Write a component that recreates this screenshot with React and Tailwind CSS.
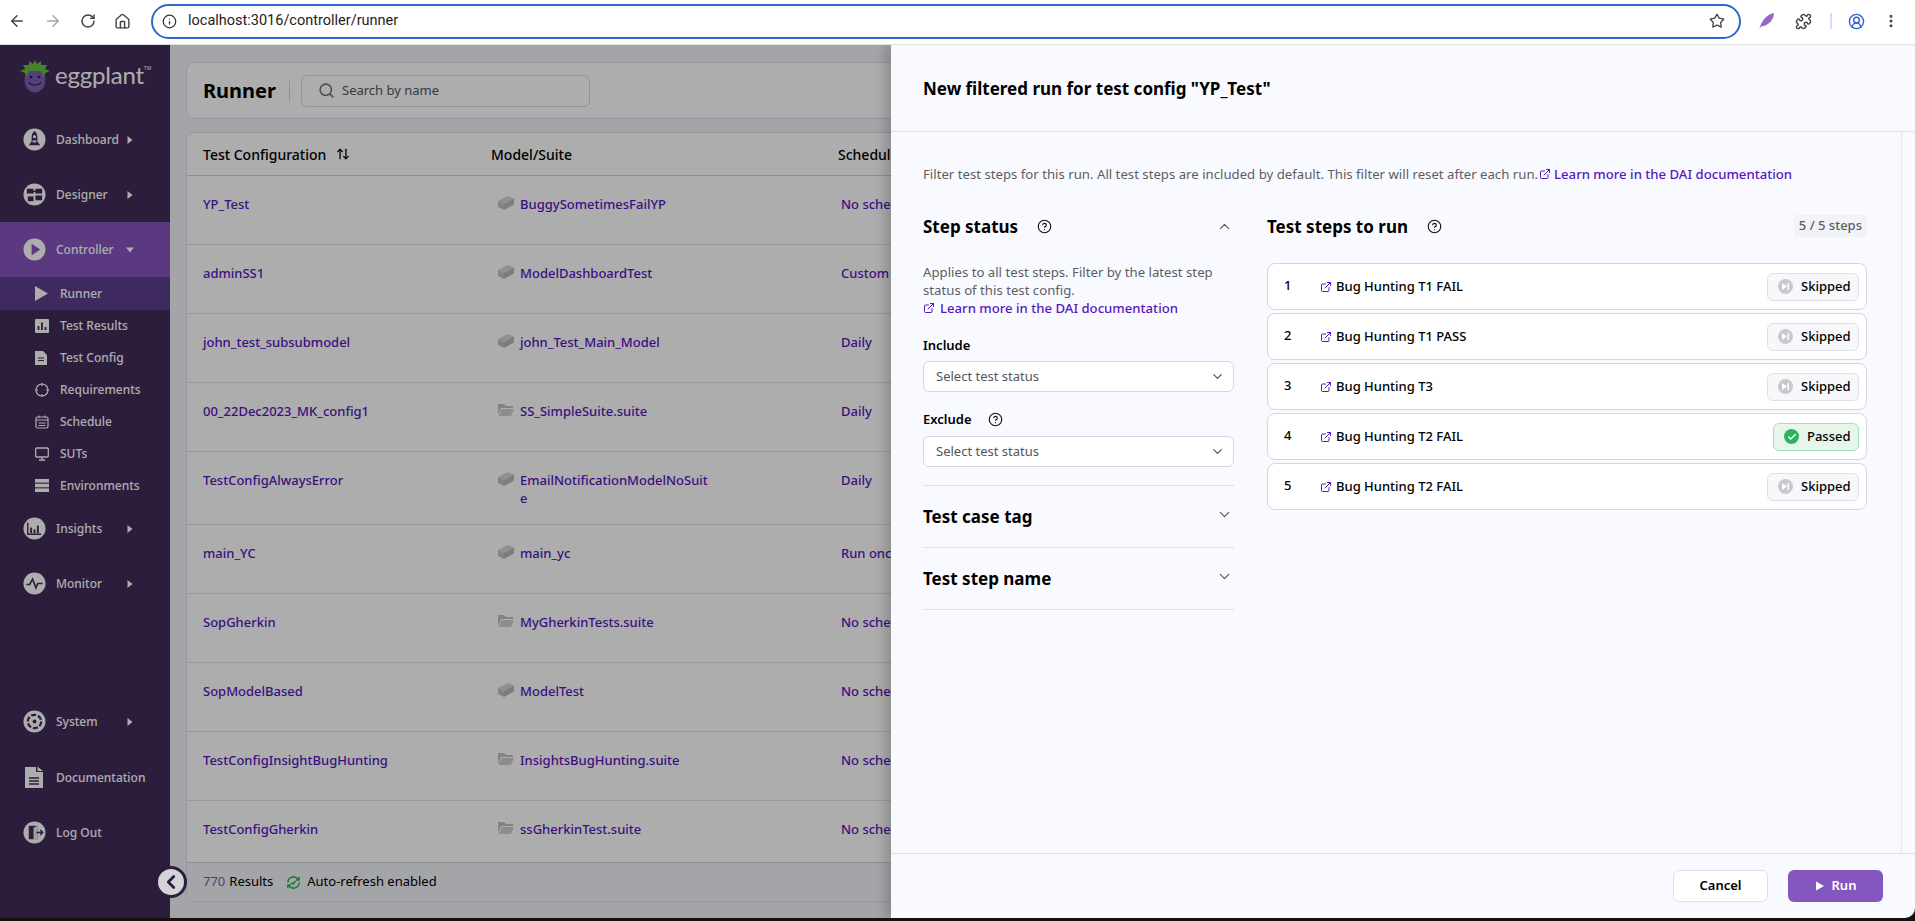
import React from 'react';
import { ArrowLeft, ArrowRight, ArrowUpDown, RotateCw, House, Info, Star, Puzzle, CircleUserRound, EllipsisVertical, Search, ChevronUp, ChevronDown, ChevronLeft, ExternalLink, CircleHelp, Check } from 'lucide-react';

const Caret = ({ down }) => (
    <svg width="8" height="10" viewBox="0 0 8 10" className={down ? "rotate-90" : ""}>
        <path d="M1.5 1 L6.5 5 L1.5 9 Z" fill="#fff" />
    </svg>
);

const CircleIcon = ({ children }) => (
    <svg width="23" height="23" viewBox="0 0 24 24" className="shrink-0">
        <circle cx="12" cy="12" r="11.5" fill="#fff" />
        {children}
    </svg>
);

const dark = "#412b5a";

const DashboardIcon = () => (
    <CircleIcon>
        <path d="M12 3 C14.5 5 15 7 15 10 L15 14 L18 18 L6 18 L9 14 L9 10 C9 7 9.500 5 12 3 Z" fill={dark} />
        <circle cx="12" cy="9" r="1.600" fill="#fff" />
        <rect x="10" y="13" width="4" height="2" fill="#fff" />
    </CircleIcon>
);

const DesignerIcon = () => (
    <CircleIcon>
        <rect x="4" y="6" width="7" height="5" fill={dark} />
        <rect x="13" y="6" width="7" height="5" fill={dark} />
        <rect x="5" y="14" width="6" height="5" fill={dark} />
        <rect x="13" y="13" width="7" height="5" fill={dark} />
        <rect x="10" y="8" width="4" height="1.500" fill={dark} />
    </CircleIcon>
);

const ControllerIcon = () => (
    <CircleIcon>
        <path d="M9 6 L18 12 L9 18 Z" fill="#8655bf" />
    </CircleIcon>
);

const InsightsIcon = () => (
    <CircleIcon>
        <path d="M5 6 V18 H19" stroke={dark} strokeWidth="1.500" fill="none" />
        <rect x="7.500" y="11" width="2" height="6" fill={dark} />
        <rect x="11" y="13" width="2" height="4" fill={dark} />
        <rect x="14.500" y="9" width="2" height="8" fill={dark} />
    </CircleIcon>
);

const MonitorIcon = () => (
    <CircleIcon>
        <path d="M3.500 13 H7 L10 7.500 L13.500 16.500 L15.500 12 H20.500" stroke={dark} strokeWidth="1.700" fill="none" />
    </CircleIcon>
);

const SystemIcon = () => (
    <CircleIcon>
        <circle cx="12" cy="12" r="7" fill="none" stroke={dark} strokeWidth="2.400" strokeDasharray="5.300 2" />
        <circle cx="12" cy="12" r="2" fill={dark} />
    </CircleIcon>
);

const DocIcon = () => (
    <svg width="18" height="23" viewBox="0 0 18 23">
        <path d="M0 1 H11 V6 H18 V22 H0 Z" fill="#fff" />
        <path d="M12.500 0.500 L18 5 H12.500 Z" fill="#fff" />
        <path d="M4 12 H14 M4 15 H14 M4 18 H14" stroke={dark} strokeWidth="1.300" />
    </svg>
);

const LogOutIcon = () => (
    <CircleIcon>
        <path d="M6 5 H15 V19 H6 Z" fill={dark} />
        <path d="M15 5 L11 7 V19 H15" fill="#fff" opacity="0.9" />
        <path d="M14 12 H20 M18 9.500 L20.500 12 L18 14.500" stroke={dark} strokeWidth="1.500" fill="none" />
    </CircleIcon>
);

const SubRunner = () => (
    <svg width="13" height="15" viewBox="0 0 13 15"><path d="M0 0 L13 7.500 L0 15 Z" fill="#fff" /></svg>
);
const SubResults = () => (
    <svg width="14" height="14" viewBox="0 0 14 14">
        <rect width="14" height="14" rx="1" fill="#fff" />
        <path d="M3.500 7 V11 M7 3.500 V11 M10.500 8 V11" stroke={dark} strokeWidth="1.800" />
    </svg>
);
const SubConfig = () => (
    <svg width="12" height="14" viewBox="0 0 12 14">
        <path d="M0 0 H8 L12 4 V14 H0 Z" fill="#fff" />
        <path d="M3 7 H9 M3 9.500 H9" stroke={dark} strokeWidth="1" />
    </svg>
);
const SubRequirements = () => (
    <svg width="14" height="14" viewBox="0 0 14 14" fill="none" stroke="#fff">
        <circle cx="7" cy="7" r="6" strokeWidth="1.200" />
        <path d="M7 0 V3 M7 11 V14 M0 7 H3 M11 7 H14" strokeWidth="1.200" />
    </svg>
);
const SubSchedule = () => (
    <svg width="14" height="14" viewBox="0 0 14 14" fill="none" stroke="#fff">
        <rect x="1" y="2" width="12" height="11" rx="1.500" strokeWidth="1.200" />
        <path d="M1 5 H13 M4 0.500 V3 M10 0.500 V3 M3.500 8 H10.500 M3.500 10.500 H10.500" strokeWidth="1.100" />
    </svg>
);
const SubSuts = () => (
    <svg width="14" height="14" viewBox="0 0 14 14" fill="none" stroke="#fff">
        <rect x="0.700" y="1" width="12.600" height="9" rx="1" strokeWidth="1.300" />
        <path d="M7 10 V13 M4 13 H10" strokeWidth="1.300" />
    </svg>
);
const SubEnv = () => (
    <svg width="14" height="13" viewBox="0 0 14 13" fill="#fff">
        <rect width="14" height="3.600" />
        <rect y="4.700" width="14" height="3.600" />
        <rect y="9.400" width="14" height="3.600" />
    </svg>
);

const BrickIcon = () => (
    <svg width="16" height="14" viewBox="0 0 16 14" className="shrink-0">
        <path d="M0 5 L10 0 L16 2.500 L6 8 Z" fill="#d4d4d4" />
        <path d="M0 5 L6 8 V14 L0 11 Z" fill="#c2c2c2" />
        <path d="M6 8 L16 2.500 V8.500 L6 14 Z" fill="#b9b9b9" />
    </svg>
);

const FolderIcon = () => (
    <svg width="16" height="13" viewBox="0 0 16 13" className="shrink-0">
        <path d="M0 1 H6 L8 3 H15 V5 H3 L0 12 Z" fill="#c2c2c2" />
        <path d="M3.500 6 H16 L13 13 H0.500 Z" fill="#d0d0d0" />
    </svg>
);

const AutoRefreshIcon = () => (
    <svg width="15" height="15" viewBox="0 0 24 24" fill="none" stroke="#2fb25c" strokeWidth="2.600" className="shrink-0">
        <path d="M3 12a9 9 0 0 1 15-6.700L21 8" />
        <path d="M21 3v5h-5" />
        <path d="M21 12a9 9 0 0 1-15 6.700L3 16" />
        <path d="M8 16H3v5" />
        <path d="M8.500 12 L11 14.500 L15.500 9.500" />
    </svg>
);

const Logo = () => (
    <div className="flex items-center h-[67px] pl-[20px] pb-[6px] shrink-0">
        <svg width="30" height="34" viewBox="0 0 30 34" className="shrink-0">
            <ellipse cx="15" cy="21" rx="10.500" ry="12.500" fill="#7f5fb5" />
            <path d="M15 1 L17 5 L21 2 L21 6 L27 6 L25 10 L30 12 L25 14 L24 18 L21 12 L9 12 L6 18 L5 14 L0 12 L5 10 L3 6 L9 6 L9 2 L13 5 Z" fill="#66c23b" />
            <circle cx="11" cy="18" r="1.300" fill="#2c1d3d" />
            <circle cx="19" cy="18" r="1.300" fill="#2c1d3d" />
            <path d="M9 23 C11 27 19 27 21 23" stroke="#2c1d3d" strokeWidth="1.200" fill="none" />
        </svg>
        <span className="ml-[5px] font-['Lato',sans-serif] text-[24px] leading-none text-white tracking-[-0.2px] pb-[2px]">eggplant</span>
        <span className="text-[5px] text-white self-start mt-[20px]">TM</span>
    </div>
);

const NavItem = ({ icon, label, active, caret }) => (
    <div className={`flex items-center h-[55px] pl-[23px] shrink-0 ${active ? "bg-[#8655bf]" : ""}`}>
        <span className="w-[34px] flex justify-center -ml-[1px] pr-[10px] shrink-0">{icon}</span>
        <span className="text-[12px] font-medium text-white w-[70px]">{label}</span>
        {caret && <Caret down={active} />}
    </div>
);

const SubItem = ({ icon, label, active, height = "h-[32px]" }) => (
    <div className={`flex items-center ${height} shrink-0 ${active ? "bg-[#5d3f8c]" : ""}`}>
        <span className="w-[60px] pl-[35px] flex items-center">{icon}</span>
        <span className="text-[12px] font-medium text-white">{label}</span>
    </div>
);

const Sidebar = () => (
    <aside className="w-[170px] bg-[#412b5a] flex flex-col shrink-0">
        <Logo />
        <NavItem icon={<DashboardIcon />} label="Dashboard" caret />
        <NavItem icon={<DesignerIcon />} label="Designer" caret />
        <NavItem icon={<ControllerIcon />} label="Controller" active caret />
        <SubItem icon={<SubRunner />} label="Runner" active height="h-[33px]" />
        <SubItem icon={<SubResults />} label="Test Results" />
        <SubItem icon={<SubConfig />} label="Test Config" />
        <SubItem icon={<SubRequirements />} label="Requirements" />
        <SubItem icon={<SubSchedule />} label="Schedule" />
        <SubItem icon={<SubSuts />} label="SUTs" />
        <SubItem icon={<SubEnv />} label="Environments" height="h-[31px]" />
        <NavItem icon={<InsightsIcon />} label="Insights" caret />
        <NavItem icon={<MonitorIcon />} label="Monitor" caret />
        <div className="mt-auto pb-[58px] flex flex-col">
            <NavItem icon={<SystemIcon />} label="System" caret />
            <div className="h-[1px]" />
            <NavItem icon={<DocIcon />} label={<span className="whitespace-nowrap">Documentation</span>} />
            <NavItem icon={<LogOutIcon />} label="Log Out" />
        </div>
    </aside>
);

const rows = [
    { name: "YP_Test", icon: "model", suite: "BuggySometimesFailYP", schedule: "No schedule" },
    { name: "adminSS1", icon: "model", suite: "ModelDashboardTest", schedule: "Custom" },
    { name: "john_test_subsubmodel", icon: "model", suite: "john_Test_Main_Model", schedule: "Daily" },
    { name: "00_22Dec2023_MK_config1", icon: "suite", suite: "SS_SimpleSuite.suite", schedule: "Daily" },
    { name: "TestConfigAlwaysError", icon: "model", suite: "EmailNotificationModelNoSuite", schedule: "Daily" },
    { name: "main_YC", icon: "model", suite: "main_yc", schedule: "Run once" },
    { name: "SopGherkin", icon: "suite", suite: "MyGherkinTests.suite", schedule: "No schedule" },
    { name: "SopModelBased", icon: "model", suite: "ModelTest", schedule: "No schedule" },
    { name: "TestConfigInsightBugHunting", icon: "suite", suite: "InsightsBugHunting.suite", schedule: "No schedule" },
    { name: "TestConfigGherkin", icon: "suite", suite: "ssGherkinTest.suite", schedule: "No schedule" },
];

const linkText = "text-[13px] font-medium text-[#5716bf] leading-[18px]";

const Main = () => (
    <main className="flex-1 min-w-0 bg-[#f2f3f9] pt-[17px] pl-[16px] pr-[16px] flex flex-col">
        <div className="h-[57px] bg-white border border-[#dedfe4] rounded-lg flex items-center pl-[16px] shrink-0">
            <h1 className="text-[20px] font-bold text-black leading-none">Runner</h1>
            <div className="w-px h-[20px] bg-[#d5d5d8] ml-[13px] mr-[11px]" />
            <div className="w-[289px] h-[32px] border border-[#d6d7dc] rounded-md flex items-center pl-[16px] gap-[7px]">
                <Search size={17} strokeWidth={2.2} className="text-[#6f7076]" />
                <span className="text-[13px] text-[#55565c]">Search by name</span>
            </div>
        </div>
        <div className="mt-[13px] h-[770px] bg-white border border-[#dedfe4] rounded-lg flex flex-col overflow-hidden shrink-0">
            <div className="grid grid-cols-[288px_347px_1fr] h-[43px] items-center pl-[16px] border-b border-[#cfd0d5] shrink-0">
                <div className="flex items-center gap-[10px] text-[14px] font-medium text-black">
                    Test Configuration
                    <ArrowUpDown size={14} strokeWidth={2.2} className="text-black" />
                </div>
                <div className="text-[14px] font-medium text-black">Model/Suite</div>
                <div className="text-[14px] font-medium text-black">Schedule</div>
            </div>
            <div className="flex-1 min-h-0 overflow-hidden">
                {rows.map((row) => (
                    <div key={row.name} className="grid grid-cols-[288px_347px_1fr] items-start pl-[16px] pt-[19px] pb-[17px] min-h-[69px] border-b border-[#e2e3e6]">
                        <div className={linkText}>{row.name}</div>
                        <div className="flex items-start pl-[7px] gap-[6px]">
                            <span className="pt-[1px]">{row.icon === "model" ? <BrickIcon /> : <FolderIcon />}</span>
                            <span className={`${linkText} w-[192px] break-all`}>{row.suite}</span>
                        </div>
                        <div className={`${linkText} pl-[3px]`}>{row.schedule}</div>
                    </div>
                ))}
            </div>
            <div className="h-[39px] bg-[#f2f3f9] border-t border-[#cfd0d5] flex items-center pl-[16px] text-[13px] text-black shrink-0">
                <span className="text-[#7d55bb]">770</span>
                <span className="ml-[4px]">Results</span>
                <span className="ml-[13px]"><AutoRefreshIcon /></span>
                <span className="ml-[6px]">Auto-refresh enabled</span>
            </div>
        </div>
    </main>
);

const ExtLink = () => <ExternalLink size={12} strokeWidth={2} className="text-[#5716bf] shrink-0" />;

const Help = () => <CircleHelp size={15} strokeWidth={1.8} className="text-[#111]" />;

const Select = () => (
    <div className="h-[31px] bg-white border border-[#d5d6de] rounded-md flex items-center justify-between pl-[12px] pr-[8px]">
        <span className="text-[13px] text-[#55565c]">Select test status</span>
        <ChevronDown size={15} strokeWidth={2} className="text-[#55565c]" />
    </div>
);

const Accordion = ({ title }) => (
    <div className="h-[62px] border-b border-[#dfe0e6] flex items-center justify-between pr-[1px]">
        <h3 className="text-[17px] font-bold text-black leading-none">{title}</h3>
        <ChevronDown size={17} strokeWidth={1.7} className="text-[#55565c] mb-[4px]" />
    </div>
);

const steps = [
    { name: "Bug Hunting T1 FAIL", status: "Skipped" },
    { name: "Bug Hunting T1 PASS", status: "Skipped" },
    { name: "Bug Hunting T3", status: "Skipped" },
    { name: "Bug Hunting T2 FAIL", status: "Passed" },
    { name: "Bug Hunting T2 FAIL", status: "Skipped" },
];

const StatusBadge = ({ status }) => {
    if (status === "Passed") {
        return (
            <div className="h-[28px] w-[86px] bg-[#e6f6ea] border border-[#a9dfb8] rounded-md flex items-center pl-[10px] gap-[8px]">
                <span className="w-[15px] h-[15px] rounded-full bg-[#2fb25c] flex items-center justify-center">
                    <Check size={10} strokeWidth={3.5} className="text-white" />
                </span>
                <span className="text-[13px] font-medium text-black">Passed</span>
            </div>
        );
    }
    return (
        <div className="h-[28px] w-[92px] bg-[#f7f8fc] border border-[#dfe0e6] rounded-md flex items-center pl-[10px] gap-[8px]">
            <span className="w-[15px] h-[15px] rounded-full bg-[#c9c9cb] flex items-center justify-center">
                <svg width="7" height="7" viewBox="0 0 7 7"><path d="M0 0 L5 3.500 L0 7 Z M5.500 0 H7 V7 H5.500 Z" fill="#fff" /></svg>
            </span>
            <span className="text-[13px] font-medium text-black">Skipped</span>
        </div>
    );
};

const Drawer = () => (
    <section className="absolute top-0 right-0 bottom-0 w-[1024px] z-20 bg-[#f9faff] rounded-br-[10px] flex flex-col shadow-[-6px_0_12px_rgba(0,0,0,0.18)]">
        <header className="h-[87px] border-b border-[#dfe0e6] flex items-center pl-[32px] shrink-0">
            <h2 className="text-[17px] font-bold text-black leading-none">New filtered run for test config "YP_Test"</h2>
        </header>
        <div className="flex-1 min-h-0 flex">
            <div className="flex-1 min-w-0 pl-[32px] pr-[34px] pt-[33px]">
                <p className="text-[13.2px] text-[#5c5d63] leading-[18px] flex items-center whitespace-nowrap">
                    Filter test steps for this run. All test steps are included by default. This filter will reset after each run.
                    <span className="ml-[1px] mr-[3px]"><ExtLink /></span>
                    <span className="text-[13.15px] font-medium text-[#5716bf]">Learn more in the DAI documentation</span>
                </p>
                <div className="flex mt-[31px] gap-[33px]">
                    <div className="w-[311px] shrink-0">
                        <div className="h-[24px] flex items-center pr-[1px]">
                            <h3 className="text-[17px] font-bold text-black leading-none">Step status</h3>
                            <span className="ml-[19px]"><Help /></span>
                            <ChevronUp size={17} strokeWidth={1.7} className="text-[#55565c] ml-auto" />
                        </div>
                        <div className="border-b border-[#dfe0e6] pb-[18px]">
                            <p className="mt-[25px] text-[13.2px] text-[#5c5d63] leading-[18px]">
                                Applies to all test steps. Filter by the latest step<br />status of this test config.
                            </p>
                            <div className="flex items-center gap-[5px]">
                                <ExtLink />
                                <span className="text-[13.15px] font-medium text-[#5716bf] leading-[18px]">Learn more in the DAI documentation</span>
                            </div>
                            <label className="block mt-[19px] mb-[7px] text-[13px] font-semibold text-black leading-[18px]">Include</label>
                            <Select />
                            <label className="flex items-center gap-[16px] mt-[18px] mb-[8px] text-[13px] font-semibold text-black leading-[18px]">
                                Exclude <Help />
                            </label>
                            <Select />
                        </div>
                        <Accordion title="Test case tag" />
                        <Accordion title="Test step name" />
                    </div>
                    <div className="flex-1 min-w-0">
                        <div className="h-[24px] flex items-center">
                            <h3 className="text-[17px] font-bold text-black leading-none">Test steps to run</h3>
                            <span className="ml-[19px]"><Help /></span>
                            <span className="ml-auto h-[22px] px-[5px] bg-[#f2f3f6] text-[13px] font-medium text-[#5c5d63] flex items-center">5 / 5 steps</span>
                        </div>
                        <div className="mt-[25px] flex flex-col gap-[3px]">
                            {steps.map((step, i) => (
                                <div key={i} className="h-[47px] bg-white border border-[#d5d6de] rounded-lg flex items-center pl-[16px] pr-[7px]">
                                    <span className="w-[36px] text-[13px] font-medium text-black mb-[2px]">{i + 1}</span>
                                    <ExtLink />
                                    <span className="ml-[4px] text-[13px] font-medium text-black">{step.name}</span>
                                    <span className="ml-auto"><StatusBadge status={step.status} /></span>
                                </div>
                            ))}
                        </div>
                    </div>
                </div>
            </div>
            <div className="w-[14px] border-l border-[#e6e7ec] shrink-0" />
        </div>
        <footer className="h-[65px] border-t border-[#dfe0e6] flex items-center justify-end gap-[20px] pr-[32px] pb-[1px] shrink-0">
            <button className="w-[95px] h-[32px] bg-white border border-[#dfe0e6] rounded-md text-[13px] font-semibold text-black">Cancel</button>
            <button className="w-[95px] h-[32px] bg-[#8457c0] rounded-md text-[13px] font-semibold text-white flex items-center justify-center gap-[7px]">
                <svg width="10" height="10" viewBox="0 0 10 10"><path d="M1 0.500 L9 5 L1 9.500 Z" fill="#fff" /></svg>
                Run
            </button>
        </footer>
    </section>
);

const BrowserBar = () => (
    <div className="h-[45px] bg-white border-b border-[#dfe0e4] flex items-center pb-[2px] shrink-0">
        <div className="w-[151px] flex items-center pl-[8px] gap-[18px] shrink-0 text-[#444]">
            <ArrowLeft size={18} strokeWidth={2} />
            <ArrowRight size={18} strokeWidth={2} className="text-[#a5a6a8]" />
            <RotateCw size={16} strokeWidth={2.2} />
            <House size={17} strokeWidth={2} />
        </div>
        <div className="w-[1590px] h-[35px] border-2 border-[#2f68cd] rounded-full flex items-center pl-[9px] pr-[14px] shrink-0">
            <Info size={15} strokeWidth={2} className="text-[#333]" />
            <span className="ml-[11px] text-[14.5px] text-[#222] font-['Roboto',sans-serif]">localhost:3016/controller/runner</span>
            <Star size={16} strokeWidth={2} className="ml-auto text-[#444]" />
        </div>
        <div className="flex-1 flex items-center pl-[18px] text-[#444]">
            <svg width="16" height="18" viewBox="0 0 16 18">
                <path d="M0.500 17 C2 9 8 2 15 1 C15 8 9 14 2 14.500 Z" fill="#9c66c6" />
            </svg>
            <Puzzle size={17} strokeWidth={2} className="ml-[20px]" />
            <div className="w-[2px] h-[16px] bg-[#d3e1f5] ml-[18px]" />
            <CircleUserRound size={17} strokeWidth={2} className="ml-[16px] text-[#2f68cd]" />
            <EllipsisVertical size={16} strokeWidth={2.5} className="ml-[18px]" />
        </div>
    </div>
);

const App = () => {
    return (
        <div className="h-[921px] w-[1915px] overflow-hidden flex flex-col bg-[#14110f] font-['Noto_Sans',sans-serif]">
            <BrowserBar />
            <div className="h-[873px] relative flex overflow-hidden rounded-br-[10px]">
                <Sidebar />
                <Main />
                <div className="absolute inset-0 z-10 bg-black/[0.32]" />
                <button className="absolute left-[155px] top-[821px] z-[15] w-[32px] h-[32px] rounded-full bg-[#d4d4d6] border-[3px] border-[#2c1d3d] flex items-center justify-center">
                    <ChevronLeft size={22} strokeWidth={3} className="text-[#2c1d3d]" />
                </button>
                <Drawer />
            </div>
        </div>
    );
};

export default App;
